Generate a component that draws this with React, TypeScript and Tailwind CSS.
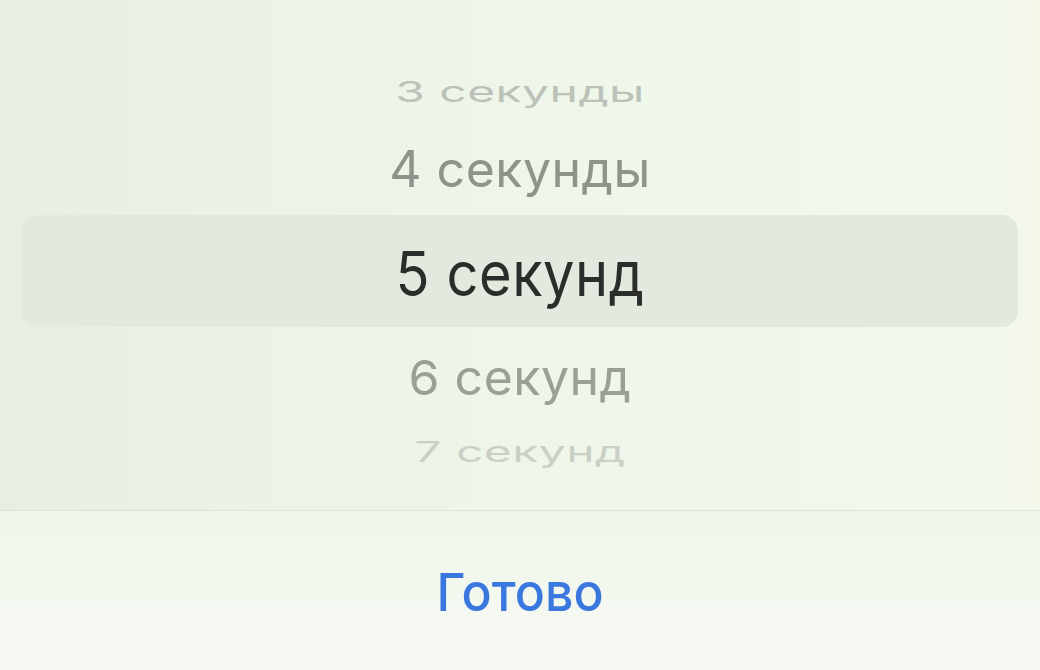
import React from 'react';

const font = { fontFamily: 'Inter, "Noto Sans", sans-serif' };

type Row = {
  label: string;
  height: string;
  text: string;
};

const above: Row[] = [
  { label: '3 секунды', height: 'h-[60px]', text: 'text-[48px] text-[#bcc2b8] scale-y-[0.6]' },
  { label: '4 секунды', height: 'h-[93px]', text: 'text-[50px] text-[#8e948b] scale-y-[1.0]' },
];

const below: Row[] = [
  { label: '6 секунд', height: 'h-[102px]', text: 'text-[50px] text-[#9ba097] scale-y-[0.97]' },
  { label: '7 секунд', height: 'h-[46px]', text: 'text-[48px] text-[#cbd0c7] scale-y-[0.6]' },
];

const WheelRow = ({ row }: { row: Row }) => (
  <div className={`${row.height} flex items-center justify-center`}>
    <span className={`leading-none tracking-[0.01em] ${row.text}`}>{row.label}</span>
  </div>
);

export default function App() {
  return (
    <div
      style={font}
      className="w-[1040px] h-[670px] overflow-hidden flex flex-col bg-gradient-to-b from-[#edf5e8] via-[#eff6ea] to-[#f6f9f3]"
    >
      {/* picker wheel */}
      <div className="h-[510px] flex flex-col pt-[62px] bg-gradient-to-r from-[#e8eee4] via-[#eef6ea] to-[#f3f8eb]">
        {above.map((r) => (
          <WheelRow key={r.label} row={r} />
        ))}
        <div className="mx-[22px] h-[112px] rounded-[16px] bg-[#e3e9df] flex items-center justify-center">
          <span className="text-[56px] leading-none tracking-[0.01em] text-[#2b2d2a] mt-[6px] scale-y-[1.1]">
            5 секунд
          </span>
        </div>
        {below.map((r) => (
          <WheelRow key={r.label} row={r} />
        ))}
      </div>

      {/* footer */}
      <div className="flex-1 border-t border-[#dde3d9] flex items-center justify-center bg-gradient-to-b from-[#eef6ea] via-[#f3f8ef] to-[#f8f9f5]">
        <button type="button" className="text-[50px] font-medium leading-none text-[#3a78df] mt-[2px] scale-y-[1.05]">
          Готово
        </button>
      </div>
    </div>
  );
}
